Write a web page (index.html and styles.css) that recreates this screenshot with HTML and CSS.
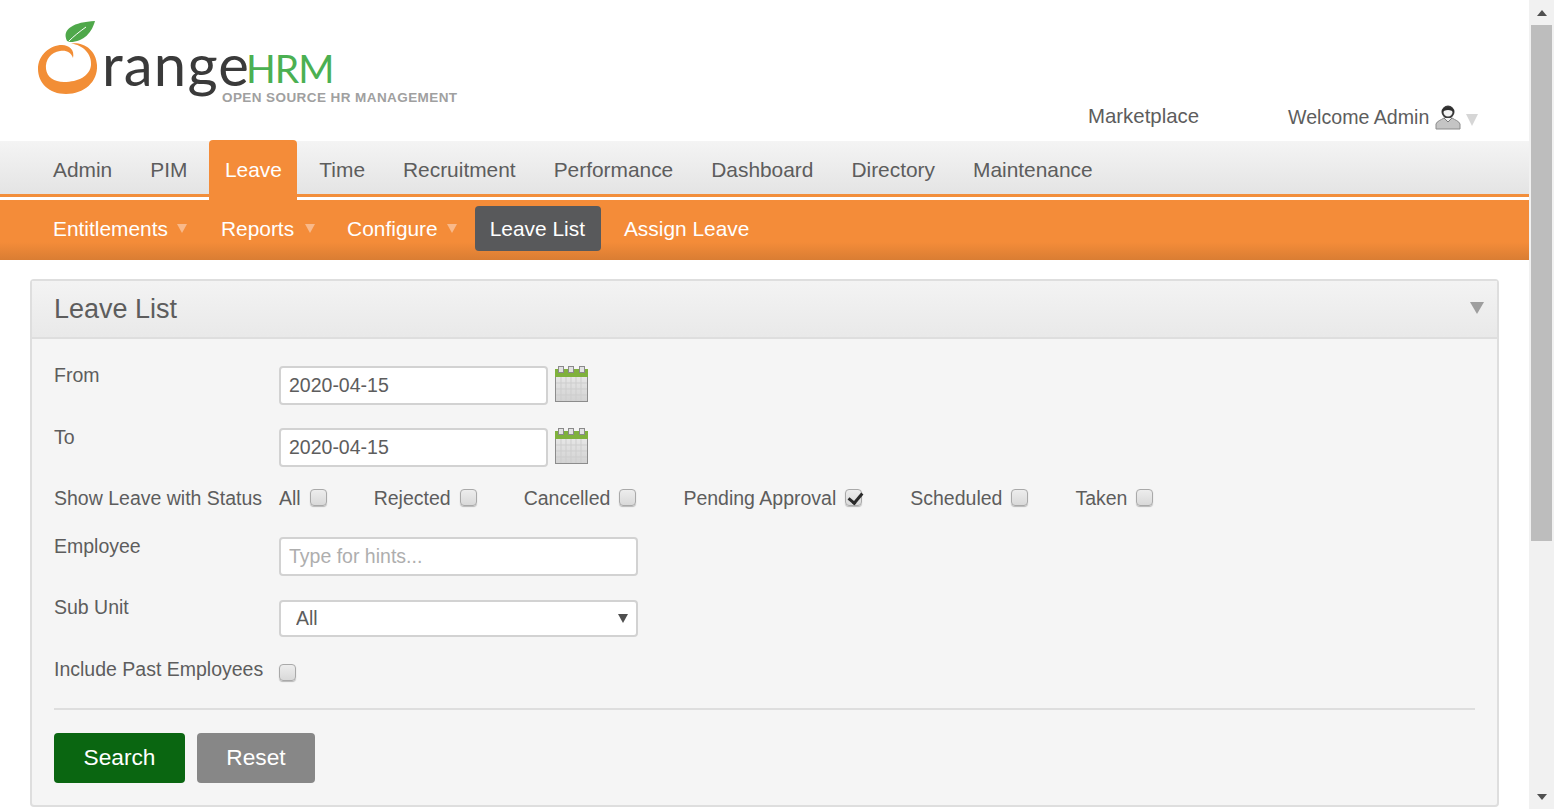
FILE: index.html
```html
<!DOCTYPE html>
<html lang="en">
<head>
<meta charset="utf-8">
<title>OrangeHRM</title>
<link rel="stylesheet" href="styles.css">
</head>
<body>
<div class="page">
  <header class="top">
    <svg class="logo" width="460" height="120" viewBox="0 0 460 120" aria-label="OrangeHRM">
      <path class="leaf" d="M67 41C61 29 74 22 95 21C92 32 84 42 70 42Z"/>
      <path class="vein" d="M69 41C74 36 79 32 86 27"/>
      <path class="peel" d="M71 43.500C84 42 96 50 97 65C98 82 84 94 66 94C49 94 38 83 38 69C38 55 50 45 62 45C69 45 75 50 73 58C71 52 66 50 60 51C51 52 45 60 46 69C47 77 54 82 64 82C78 82 90 76 91 65C92 54 83 45 71 43.500Z"/>
      <text class="lg-range" x="102" y="86">range</text>
      <text class="lg-hrm" x="246" y="83">HRM</text>
      <text class="lg-tag" x="222" y="102">OPEN SOURCE HR MANAGEMENT</text>
    </svg>
    <a class="market">Marketplace</a>
    <div class="welcome">
      <span>Welcome Admin</span>
      <svg class="usr" width="26" height="26" viewBox="0 0 26 26">
        <path d="M1 25V20C2 17 6 16 9 14H17C20 16 24 17 25 20V25Z" fill="#c4c4c4" stroke="#8b8b8b"/>
        <circle cx="13" cy="8" r="5.500" fill="#f4f4f4" stroke="#3c3c3c" stroke-width="2"/>
        <path d="M7 9C6 1 20 1 19 9C17 5 9 5 7 9Z" fill="#2e2e2e"/>
        <path d="M9 14L13 18L17 14" fill="#f1f1f1" stroke="#777"/>
      </svg>
      <i class="tri tri-user"></i>
    </div>
  </header>

  <nav class="main-nav">
    <a>Admin</a><a>PIM</a><a class="on">Leave</a><a>Time</a><a>Recruitment</a><a>Performance</a><a>Dashboard</a><a>Directory</a><a>Maintenance</a>
  </nav>

  <nav class="sub-nav">
    <a class="drop d1">Entitlements<i class="tri tri-sub"></i></a>
    <a class="drop d2">Reports<i class="tri tri-sub"></i></a>
    <a class="drop d3">Configure<i class="tri tri-sub"></i></a>
    <a class="cur">Leave List</a>
    <a class="assign">Assign Leave</a>
  </nav>

  <section class="panel">
    <div class="panel-head">
      <h1>Leave List</h1>
      <i class="tri tri-head"></i>
    </div>
    <form class="panel-body">
      <div class="row r-date">
        <label>From</label>
        <input class="txt date" type="text" value="2020-04-15">
        <svg class="cal" width="33" height="36" viewBox="0 0 33 36"><use href="#calendar"/></svg>
      </div>
      <div class="row r-date">
        <label>To</label>
        <input class="txt date" type="text" value="2020-04-15">
        <svg class="cal" width="33" height="36" viewBox="0 0 33 36"><use href="#calendar"/></svg>
      </div>
      <div class="row r-status">
        <label>Show Leave with Status</label>
        <div class="checks">
          <span class="chk">All<input type="checkbox"></span>
          <span class="chk">Rejected<input type="checkbox"></span>
          <span class="chk">Cancelled<input type="checkbox"></span>
          <span class="chk c4">Pending Approval<input type="checkbox" checked></span>
          <span class="chk">Scheduled<input type="checkbox"></span>
          <span class="chk">Taken<input type="checkbox"></span>
        </div>
      </div>
      <div class="row r-emp">
        <label>Employee</label>
        <input class="txt wide" type="text" placeholder="Type for hints...">
      </div>
      <div class="row r-unit">
        <label>Sub Unit</label>
        <div class="sel"><select><option>All</option></select></div>
      </div>
      <div class="row r-past">
        <label>Include Past Employees</label>
        <input type="checkbox">
      </div>
      <hr>
      <div class="actions">
        <button type="button" class="btn search">Search</button>
        <button type="button" class="btn reset">Reset</button>
      </div>
    </form>
  </section>
</div>

<aside class="scrollbar">
  <i class="sb-up"></i>
  <div class="sb-thumb"></div>
  <i class="sb-down"></i>
</aside>

<svg class="defs" width="0" height="0">
  <defs>
    <linearGradient id="calbody" x1="0" y1="0" x2="0" y2="1">
      <stop offset="0" stop-color="#ececec"/><stop offset="1" stop-color="#d2d2d2"/>
    </linearGradient>
    <g id="calendar">
      <rect x="0.500" y="3.500" width="32" height="32" fill="url(#calbody)" stroke="#8c8c8c"/>
      <rect x="0" y="3" width="33" height="8" fill="#7fb13c"/>
      <path d="M6 11V35M11 11V35M16 11V35M21 11V35M26 11V35M1 17H32M1 23H32M1 29H32" stroke="#cdcdcd" stroke-width="1" fill="none"/>
      <rect x="3.500" y="0.500" width="5" height="6" fill="#e2e2e2" stroke="#8a8a8a"/>
      <rect x="13.500" y="0.500" width="5" height="6" fill="#e2e2e2" stroke="#8a8a8a"/>
      <rect x="24.500" y="0.500" width="5" height="6" fill="#e2e2e2" stroke="#8a8a8a"/>
    </g>
  </defs>
</svg>
</body>
</html>
```
FILE: styles.css
```css
* { box-sizing: border-box; }
html, body { margin: 0; height: 809px; overflow: hidden; }
body {
  display: flex;
  background: #fff;
  color: #5d5d5d;
  font: 19.5px/24px "Liberation Sans", Arial, sans-serif;
}
a { color: inherit; text-decoration: none; display: block; }
i { display: block; }
.page { width: 1529px; flex: none; }
.defs { position: absolute; }

.tri { width: 0; height: 0; border-style: solid; border-color: transparent; }

/* header */
.top { height: 141px; display: flex; align-items: flex-start; position: relative; }
.logo { flex: none; margin-right: 628px; }
.logo .leaf { fill: #4fa84a; }
.logo .vein { fill: none; stroke: #fff; stroke-width: 1; }
.logo .peel { fill: #f28e36; }
.lg-range { font: 400 58px "Lato", sans-serif; fill: #3a3a3a; letter-spacing: 1.2px; }
.lg-hrm { font: 400 39px "Lato", sans-serif; fill: #4bb052; letter-spacing: -1px; }
.lg-tag { font: bold 13.5px "Liberation Sans", sans-serif; fill: #a0a0a0; letter-spacing: .42px; }
.market { margin-top: 104px; margin-right: 89px; font-size: 20.4px; }
.welcome { margin-top: 103px; display: flex; align-items: flex-start; }
.welcome span { margin-top: 2px; font-size: 19.6px; }
.usr { margin-left: 6px; margin-top: 1px; }
.tri-user { margin: 11px 0 0 5px; border-width: 12px 6px 0; border-top-color: #d6d6d6; }

/* main navigation */
.main-nav {
  height: 59px;
  padding-left: 34px;
  display: flex;
  align-items: flex-start;
  font-size: 20.9px;
  background: linear-gradient(#f4f4f4, #e4e4e4 53px, #f28e3b 53px, #f28e3b 56px, #fff 56px);
}
.main-nav a { padding: 17px 19px 0; height: 53px; }
.main-nav a.on {
  margin: -1px 3px 0 3px;
  padding: 18px 0 0;
  width: 88px;
  height: 60px;
  text-align: center;
  background: #f48c39;
  color: #fff;
  border-radius: 4px 4px 0 0;
}

/* sub navigation */
.sub-nav {
  height: 60px;
  padding: 6px 0 0 34px;
  display: flex;
  align-items: flex-start;
  font-size: 20.9px;
  background: linear-gradient(#f48c39, #f48c39 70%, #d97d33);
  color: #fff;
}
.sub-nav a { height: 45px; padding: 11px 0 0 19px; display: flex; align-items: flex-start; }
.d1 { padding-right: 15px !important; }
.d2 { padding-right: 13px !important; }
.d3 { padding-right: 15px !important; }
.tri-sub { margin: 7px 0 0 9px; border-width: 9px 5px 0; border-top-color: #f9b98a; }
.d2 .tri-sub { margin-left: 11px; }
.sub-nav a.cur { margin: 0 3px; padding: 11px 16px 0 15px; background: #58595b; border-radius: 4px; }
.sub-nav a.assign { padding-left: 20px; }

/* panel */
.panel {
  margin: 19px 30px 0;
  height: 528px;
  border: 2px solid #dedede;
  border-radius: 4px;
  background: #f5f5f5;
}
.panel-head {
  height: 58px;
  padding: 0 13px 0 22px;
  border-bottom: 2px solid #dedede;
  background: linear-gradient(#f3f3f3, #e9e9e9);
  display: flex;
  align-items: center;
  justify-content: space-between;
}
h1 { margin: 0; font-size: 27px; line-height: 56px; font-weight: 400; color: #5d5d5d; }
.tri-head { border-width: 12px 7px 0; border-top-color: #9e9e9e; margin-top: -2px; }

/* form */
.panel-body { padding: 0 22px; }
.row { display: flex; align-items: flex-start; }
.row label { width: 225px; flex: none; margin-top: -3px; }
.r-date { margin-top: 23px; height: 39px; }
.r-date:first-child { margin-top: 27px; }
.txt {
  height: 39px;
  padding: 0 8px;
  border: 2px solid #d2d2d2;
  border-radius: 4px;
  background: #fff;
  color: #5d5d5d;
  font: 19.5px "Liberation Sans", Arial, sans-serif;
  outline: 0;
}
.txt::placeholder { color: #aeaeae; opacity: 1; }
.date { width: 269px; }
.wide { width: 359px; }
.cal { margin: 0 0 0 7px; }

.r-status { margin-top: 19px; height: 24px; }
.r-status label { margin-top: 0; }
.checks { display: flex; }
.chk { display: flex; align-items: center; gap: 9px; height: 24px; margin-right: 47px; }
.chk input { margin-top: -2px !important; }
.c4 { margin-right: 48px; }

input[type="checkbox"] {
  appearance: none;
  position: relative;
  flex: none;
  width: 17px;
  height: 17px;
  margin: 0;
  border: 1px solid #a9a9a9;
  border-radius: 4px;
  background: linear-gradient(#ededed, #d9d9d9);
  box-shadow: 0 1px 1px rgba(0,0,0,.25);
}
input[type="checkbox"]:checked::after {
  content: "";
  position: absolute;
  left: 5px;
  top: 0;
  width: 6px;
  height: 11px;
  border: solid #2a2a2a;
  border-width: 0 3.500px 3.500px 0;
  transform: rotate(40deg);
}

.r-emp { margin-top: 27px; height: 39px; }
.r-unit { margin-top: 24px; height: 37px; }
.r-unit label { margin-top: -5px; }
.sel { position: relative; width: 359px; }
.sel::after {
  content: "";
  position: absolute;
  right: 10px;
  top: 14px;
  border: solid transparent;
  border-width: 9px 5px 0;
  border-top-color: #4f4f4f;
}
.sel select {
  appearance: none;
  display: block;
  width: 100%;
  height: 37px;
  padding: 0 0 2px 15px;
  border: 2px solid #d2d2d2;
  border-radius: 4px;
  background: #fff;
  color: #5d5d5d;
  font: 19.5px "Liberation Sans", Arial, sans-serif;
}
.r-past { margin-top: 25px; height: 24px; }
.r-past label { margin-top: -5px; }
.r-past input { margin-top: 2px; }

hr { margin: 22px 0 0; height: 2px; border: 0; background: #dedede; }
.actions { margin-top: 23px; display: flex; gap: 12px; }
.btn {
  height: 50px;
  padding: 0 0 2px;
  border: 0;
  border-radius: 4px;
  color: #fff;
  font: 22.7px "Liberation Sans", Arial, sans-serif;
}
.search { width: 131px; background: #0a6611; }
.reset { width: 118px; background: #878787; }

/* scrollbar */
.scrollbar {
  width: 25px;
  flex: none;
  height: 809px;
  background: #f1f1f1;
  display: flex;
  flex-direction: column;
  align-items: center;
}
.sb-up, .sb-down { width: 0; height: 0; border: solid transparent; }
.sb-up { margin-top: 10px; border-width: 0 5px 6px; border-bottom-color: #505050; }
.sb-thumb { margin-top: 9px; width: 21px; height: 516px; background: #bdbdbd; }
.sb-down { margin-top: auto; margin-bottom: 9px; border-width: 6px 5px 0; border-top-color: #505050; }
```
